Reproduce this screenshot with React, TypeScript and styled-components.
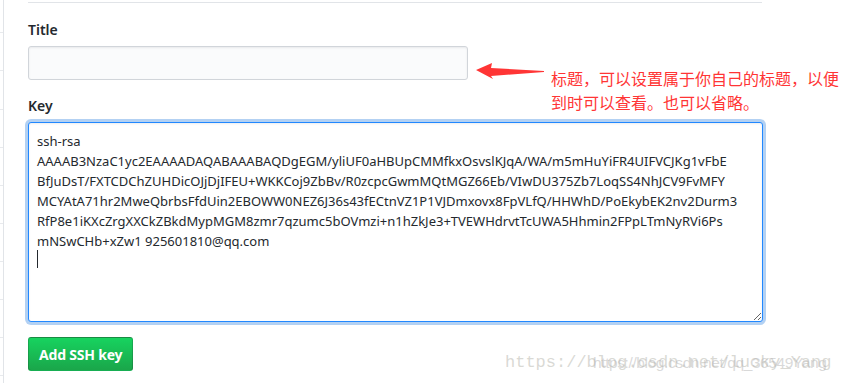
import React from "react";
import styled, { createGlobalStyle } from "styled-components";

const Global = createGlobalStyle`
  html, body { margin: 0; padding: 0; background: #fff; }
  body { width: 847px; height: 383px; overflow: hidden; }
  * { box-sizing: border-box; }
`;

const UI_FONT = `"Noto Sans", "Open Sans", "Liberation Sans", sans-serif`;

const Page = styled.div`
  position: relative;
  display: flex;
  width: 847px;
  height: 383px;
  font-family: ${UI_FONT};
  color: #24292e;
`;

const Sidebar = styled.div`
  width: 4px;
  flex: none;
  border-right: 1px solid #e1e4e8;
  display: flex;
  flex-direction: column;
`;

const SideRow = styled.div<{ $h: number }>`
  height: ${(p) => p.$h}px;
  flex: none;
  border-bottom: 1px solid #e8eaed;
`;

const Main = styled.div`
  width: 735px;
  margin-left: 24px;
  display: flex;
  flex-direction: column;
`;

const Divider = styled.div`
  height: 3px;
  border-bottom: 1px solid #e1e4e8;
  margin-right: 1px;
`;

const Label = styled.label<{ $mt: number }>`
  display: block;
  margin-top: ${(p) => p.$mt}px;
  font-size: 14px;
  line-height: 20px;
  font-weight: 600;
`;

const FieldRow = styled.div`
  position: relative;
  margin-top: 6px;
`;

const TitleInput = styled.input`
  display: block;
  width: 440px;
  height: 34px;
  padding: 6px 8px;
  font: 14px/20px ${UI_FONT};
  background: #fafbfc;
  border: 1px solid #d1d5da;
  border-radius: 3px;
  box-shadow: inset 0 1px 2px rgba(27, 31, 35, 0.075);
  outline: none;
`;

const Annotation = styled.div`
  position: absolute;
  left: 448px;
  top: 17px;
  display: flex;
  align-items: flex-start;
`;

const Arrow = styled.svg`
  flex: none;
  width: 70px;
  height: 20px;
`;

const Note = styled.div`
  margin-left: 5px;
  margin-top: 4px;
  width: 300px;
  font-family: "Noto Sans CJK SC", sans-serif;
  font-size: 16px;
  line-height: 23.5px;
  color: #ff3535;
`;

const KeyWrap = styled.div`
  position: relative;
  margin-top: 6px;
`;

const KeyArea = styled.textarea`
  display: block;
  width: 735px;
  height: 200px;
  padding: 8px 8px;
  font-family: ${UI_FONT};
  font-size: 13px;
  line-height: 20px;
  color: #24292e;
  white-space: pre;
  overflow: hidden;
  background: #fff;
  border: 1px solid #2188ff;
  border-radius: 3px;
  outline: none;
  box-shadow: inset 0 1px 2px rgba(27, 31, 35, 0.075), 0 0 0 3px rgba(3, 102, 214, 0.3);
  resize: both;
`;

const Caret = styled.span`
  position: absolute;
  left: 9px;
  top: 128px;
  width: 1px;
  height: 18px;
  background: #24292e;
  pointer-events: none;
`;

const Button = styled.button`
  align-self: flex-start;
  margin-top: 15px;
  height: 34px;
  padding: 0 10px;
  font-family: ${UI_FONT};
  font-size: 14px;
  font-weight: 700;
  letter-spacing: -0.2px;
  color: #fff;
  background: linear-gradient(180deg, #17d35f 0%, #1aa64a 100%);
  border: 1px solid rgba(27, 31, 35, 0.2);
  border-radius: 3px;
`;

const Watermark = styled.div`
  position: absolute;
  left: 505px;
  top: 351px;
  width: 340px;
  height: 24px;
  pointer-events: none;
`;

const MarkMono = styled.span`
  position: absolute;
  left: 0;
  top: 0;
  font-family: "Liberation Mono", monospace;
  font-size: 17px;
  line-height: 24px;
  color: rgba(180, 180, 170, 0.5);
  white-space: nowrap;
`;

const MarkSans = styled.span`
  position: absolute;
  left: 88px;
  top: 1px;
  font-family: "Liberation Sans", sans-serif;
  font-size: 15.5px;
  line-height: 22px;
  letter-spacing: -0.4px;
  color: rgba(180, 180, 180, 0.5);
  white-space: nowrap;
`;

const keyText = [
  "ssh-rsa",
  "AAAAB3NzaC1yc2EAAAADAQABAAABAQDgEGM/yliUF0aHBUpCMMfkxOsvslKJqA/WA/m5mHuYiFR4UIFVCJKg1vFbE",
  "BfJuDsT/FXTCDChZUHDicOJjDjIFEU+WKKCoj9ZbBv/R0zcpcGwmMQtMGZ66Eb/VIwDU375Zb7LoqSS4NhJCV9FvMFY",
  "MCYAtA71hr2MweQbrbsFfdUin2EBOWW0NEZ6J36s43fECtnVZ1P1VJDmxovx8FpVLfQ/HHWhD/PoEkybEK2nv2Durm3",
  "RfP8e1iKXcZrgXXCkZBkdMypMGM8zmr7qzumc5bOVmzi+n1hZkJe3+TVEWHdrvtTcUWA5Hhmin2FPpLTmNyRVi6Ps",
  "mNSwCHb+xZw1 925601810@qq.com",
  "",
].join("\n");

const sideRows = [33, 38, 39, 38, 38, 38, 38, 38, 38, 38];

export default function App() {
  return (
    <>
      <Global />
      <Page>
        <Sidebar>
          {sideRows.map((h, i) => (
            <SideRow key={i} $h={h} />
          ))}
        </Sidebar>
        <Main>
          <Divider />
          <Label $mt={17}>Title</Label>
          <FieldRow>
            <TitleInput type="text" />
            <Annotation>
              <Arrow viewBox="0 0 70 20">
                <polygon
                  points="0,7 16,0 15,5 68,8 68,9 15,13 17,16"
                  fill="#ff3535"
                />
              </Arrow>
              <Note>
                标题，可以设置属于你自己的标题，以便到时可以查看。也可以省略。
              </Note>
            </Annotation>
          </FieldRow>
          <Label $mt={16}>Key</Label>
          <KeyWrap>
            <KeyArea defaultValue={keyText} spellCheck={false} />
            <Caret />
          </KeyWrap>
          <Button type="button">Add SSH key</Button>
        </Main>
        <Watermark>
          <MarkMono>https://blog.csdn.net/lucky_Yang</MarkMono>
          <MarkSans>https://blog.csdn.net/qq_36549Yang</MarkSans>
        </Watermark>
      </Page>
    </>
  );
}
